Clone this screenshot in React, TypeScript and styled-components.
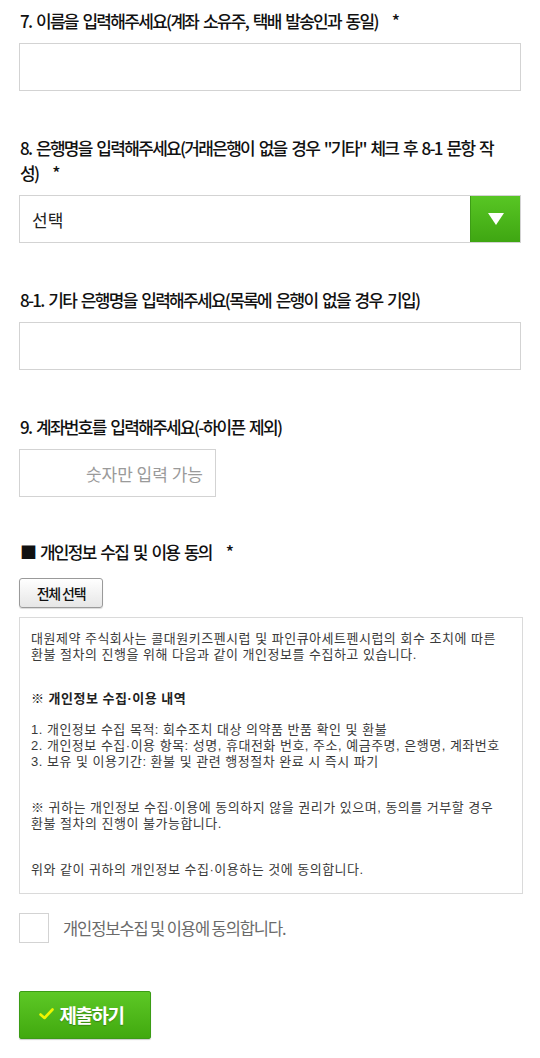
import styled, { createGlobalStyle } from "styled-components"

const GlobalStyle = createGlobalStyle`
    body {
        margin: 0;
        background: #fff;
        font-family: "Noto Sans CJK KR", "Noto Sans", sans-serif;
    }
`

const Star = () => <StarMark>*</StarMark>

export default function App() {
    return (
        <>
            <GlobalStyle />
            <Page>
                <Question>
                    <Label>7. 이름을 입력해주세요(계좌 소유주, 택배 발송인과 동일)<Star /></Label>
                    <TextInput type="text" />
                </Question>

                <Question>
                    <Label>8. 은행명을 입력해주세요(거래은행이 없을 경우 "기타" 체크 후 8-1 문항 작성)<Star /></Label>
                    <SelectBox>
                        <SelectText>선택</SelectText>
                        <SelectArrow>
                            <svg width="16" height="12" viewBox="0 0 16 12">
                                <polygon points="0,0 16,0 8,12" fill="#fff" />
                            </svg>
                        </SelectArrow>
                    </SelectBox>
                </Question>

                <Question>
                    <Label>8-1. 기타 은행명을 입력해주세요(목록에 은행이 없을 경우 기입)</Label>
                    <TextInput type="text" />
                </Question>

                <Question>
                    <Label>9. 계좌번호를 입력해주세요(-하이픈 제외)</Label>
                    <NumberInput type="text" placeholder="숫자만 입력 가능" />
                </Question>

                <Agreement>
                    <Label>■ 개인정보 수집 및 이용 동의<Star /></Label>
                    <SelectAllButton>전체 선택</SelectAllButton>
                    <TermsBox>
                        <TermsParagraph>
                            대원제약 주식회사는 콜대원키즈펜시럽 및 파인큐아세트펜시럽의 회수 조치에 따른 환불 절차의 진행을 위해 다음과 같이 개인정보를 수집하고 있습니다.
                        </TermsParagraph>
                        <TermsTitle>※ 개인정보 수집·이용 내역</TermsTitle>
                        <TermsParagraph $gap={15}>
                            1. 개인정보 수집 목적: 회수조치 대상 의약품 반품 확인 및 환불<br />
                            2. 개인정보 수집·이용 항목: 성명, 휴대전화 번호, 주소, 예금주명, 은행명, 계좌번호<br />
                            3. 보유 및 이용기간: 환불 및 관련 행정절차 완료 시 즉시 파기
                        </TermsParagraph>
                        <TermsParagraph $gap={30}>
                            ※ 귀하는 개인정보 수집·이용에 동의하지 않을 권리가 있으며, 동의를 거부할 경우 환불 절차의 진행이 불가능합니다.
                        </TermsParagraph>
                        <TermsParagraph $gap={30}>
                            위와 같이 귀하의 개인정보 수집·이용하는 것에 동의합니다.
                        </TermsParagraph>
                    </TermsBox>
                    <CheckRow>
                        <CheckBox />
                        <CheckLabel>개인정보수집 및 이용에 동의합니다.</CheckLabel>
                    </CheckRow>
                </Agreement>

                <SubmitButton>
                    <svg width="15" height="12" viewBox="0 0 15 12">
                        <path d="M1.5 6.5 L5.5 10 L13.5 1.5" fill="none" stroke="#f0f500" strokeWidth="2.6" strokeLinecap="round" strokeLinejoin="round" />
                    </svg>
                    제출하기
                </SubmitButton>
            </Page>
        </>
    )
}

const Page = styled.div`
    width: 540px;
    box-sizing: border-box;
    padding: 8px 19px 20px 19px;
`

const Question = styled.div`
    margin-bottom: 44px;
`

const Label = styled.div`
    width: 490px;
    padding-left: 1px;
    margin-bottom: 10px;
    font-size: 17px;
    line-height: 25px;
    font-weight: 500;
    letter-spacing: -1.7px;
    word-spacing: 2.5px;
    color: #111;
`

const StarMark = styled.span`
    margin-left: 14px;
    font-weight: 500;
    letter-spacing: 0;
`

const TextInput = styled.input`
    display: block;
    width: 502px;
    height: 48px;
    box-sizing: border-box;
    border: 1px solid #d3d3d3;
    background: #fff;
    padding: 0 12px;
    font-size: 17px;
    font-family: inherit;
    outline: none;
`

const NumberInput = styled(TextInput)`
    width: 197px;
    text-align: right;
    &::placeholder {
        color: #9a9a9a;
    }
`

const SelectBox = styled.div`
    display: flex;
    align-items: center;
    width: 502px;
    height: 48px;
    box-sizing: border-box;
    border: 1px solid #d3d3d3;
    background: #fff;
`

const SelectText = styled.div`
    flex: 1;
    padding-left: 12px;
    font-size: 17px;
    color: #222;
`

const SelectArrow = styled.div`
    display: flex;
    align-items: center;
    justify-content: center;
    width: 49px;
    height: 46px;
    background: linear-gradient(#58c624, #3fa612);
    border-left: 1px solid #3d9d16;
`

const Agreement = styled.div`
    margin-top: -2px;
`

const SelectAllButton = styled.button`
    display: block;
    width: 84px;
    height: 30px;
    margin-top: 14px;
    padding: 0;
    border: 1px solid #9a9a9a;
    border-radius: 3px;
    background: linear-gradient(#ffffff, #e6e6e6);
    box-shadow: 0 1px 1px rgba(0, 0, 0, 0.15);
    font-family: inherit;
    font-size: 14px;
    font-weight: 500;
    letter-spacing: -1.2px;
    color: #111;
`

const TermsBox = styled.div`
    width: 504px;
    box-sizing: border-box;
    margin-top: 9px;
    padding: 13px 11px 15px 11px;
    border: 1px solid #dadada;
    font-family: "Liberation Sans", "Noto Sans CJK KR", sans-serif;
    font-size: 13px;
    line-height: 16px;
    letter-spacing: 0.5px;
    word-break: keep-all;
    color: #3a3a3a;
`

const TermsParagraph = styled.div<{ $gap?: number }>`
    margin-top: ${({ $gap }) => $gap ?? 0}px;
`

const TermsTitle = styled.div`
    margin-top: 28px;
    font-weight: 700;
    color: #222;
`

const CheckRow = styled.div`
    display: flex;
    align-items: center;
    gap: 14px;
    margin-top: 19px;
`

const CheckBox = styled.div`
    width: 30px;
    height: 30px;
    box-sizing: border-box;
    border: 1px solid #d3d3d3;
    background: #fff;
`

const CheckLabel = styled.span`
    font-size: 16.5px;
    letter-spacing: -1.1px;
    color: #6a6a6a;
`

const SubmitButton = styled.button`
    display: flex;
    align-items: center;
    justify-content: center;
    gap: 6px;
    width: 132px;
    height: 48px;
    margin-top: 48px;
    padding: 0 8px 2px 0;
    border: 1px solid #3b9c15;
    border-radius: 2px;
    background: linear-gradient(#5dc826, #41a90f);
    box-shadow: 0 1px 1px rgba(0, 0, 0, 0.2);
    font-family: inherit;
    font-size: 19px;
    font-weight: 700;
    letter-spacing: -1.5px;
    color: #fff;
    text-shadow: 0 1px 1px rgba(0, 0, 0, 0.25);
`
